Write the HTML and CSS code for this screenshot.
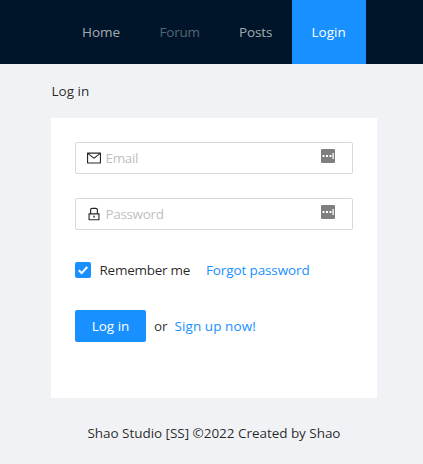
FILE: index.html
```html
<!DOCTYPE html>
<html lang="en">
<head>
<meta charset="utf-8">
<title>Log in</title>
<link rel="stylesheet" href="styles.css">
</head>
<body>
<header class="header">
  <nav class="menu">
    <a class="item home">Home</a>
    <a class="item forum disabled">Forum</a>
    <a class="item posts">Posts</a>
    <a class="item login selected">Login</a>
  </nav>
</header>
<main class="content">
  <div class="breadcrumb"><span>Log in</span></div>
  <form class="card">
    <div class="field">
      <svg class="icon" viewBox="64 64 896 896"><path d="M928 160H96c-17.7 0-32 14.3-32 32v640c0 17.7 14.3 32 32 32h832c17.7 0 32-14.3 32-32V192c0-17.7-14.3-32-32-32zm-40 110.8V792H136V270.8l-27.6-21.5 39.3-50.5 42.8 33.3h643.1l42.8-33.3 39.3 50.5-27.7 21.5zM833.6 232L512 482 190.4 232l-42.8-33.3-39.3 50.5 27.6 21.5 341.6 265.6a55.99 55.99 0 0 0 68.7 0L888 270.8l27.6-21.5-39.3-50.5-42.7 33.2z"/></svg>
      <input class="input email" type="text" placeholder="Email">
      <svg class="manager" viewBox="0 0 14 14"><rect width="14" height="14" rx="1" fill="#7f7f7f"/><path d="M1.5 6h2v2h-2zM5 6h2v2H5zM8.5 6h2v2h-2zM11.5 4h1.3v6h-1.3z" fill="#fff"/></svg>
    </div>
    <div class="field">
      <svg class="icon" viewBox="64 64 896 896"><path d="M832 464h-68V240c0-70.7-57.3-128-128-128H388c-70.7 0-128 57.3-128 128v224h-68c-17.7 0-32 14.3-32 32v384c0 17.7 14.3 32 32 32h640c17.7 0 32-14.3 32-32V496c0-17.7-14.3-32-32-32zM332 240c0-30.9 25.1-56 56-56h248c30.9 0 56 25.1 56 56v224H332V240zm460 600H232V536h560v304zM484 701v53c0 4.4 3.6 8 8 8h40c4.4 0 8-3.6 8-8v-53a48.1 48.1 0 1 0-56 0z"/></svg>
      <input class="input password" type="password" placeholder="Password">
      <svg class="manager" viewBox="0 0 14 14"><rect width="14" height="14" rx="1" fill="#7f7f7f"/><path d="M1.5 6h2v2h-2zM5 6h2v2H5zM8.5 6h2v2h-2zM11.5 4h1.3v6h-1.3z" fill="#fff"/></svg>
    </div>
    <div class="row">
      <svg class="checkbox" viewBox="0 0 16 16"><rect width="16" height="16" rx="2" fill="#1890ff"/><path d="M3.8 8.2l2.9 2.9 5.5-6.1" fill="none" stroke="#fff" stroke-width="2"/></svg>
      <span class="remember">Remember me</span>
      <a class="link forgot">Forgot password</a>
    </div>
    <div class="row">
      <button class="button" type="button">Log in</button>
      <span class="or">or</span>
      <a class="link signup">Sign up now!</a>
    </div>
  </form>
</main>
<footer class="footer"><span>Shao Studio [SS] ©2022 Created by Shao</span></footer>
</body>
</html>
```
FILE: styles.css
```css
* { box-sizing: border-box; }
body {
  margin: 0;
  height: 464px;
  overflow: hidden;
  background: #f0f2f5;
  color: rgba(0, 0, 0, .85);
  font: 13.5px/22px "Open Sans", "Noto Sans", sans-serif;
}
.header { height: 64px; padding-left: 62px; background: #001529; }
.menu { display: flex; height: 64px; line-height: 64px; }
.item { padding-left: 20px; color: rgba(255, 255, 255, .65); white-space: nowrap; }
.home { width: 77.5px; }
.forum { width: 79.5px; letter-spacing: -.2px; }
.posts { width: 73px; letter-spacing: -.15px; }
.login { width: 74px; padding-left: 19.5px; }
.disabled { color: rgba(255, 255, 255, .35); }
.selected { background: #1890ff; color: #fff; }
.content { padding: 0 46px 0 51px; }
.breadcrumb { padding: 16px 0 16px .5px; }
.card { height: 280px; padding: 24px; background: #fff; }
.field {
  display: flex;
  align-items: center;
  height: 32px;
  margin-bottom: 24px;
  padding: 0 17px 0 11px;
  border: 1px solid #d9d9d9;
  border-radius: 2px;
}
.icon { width: 14px; height: 14px; margin-right: 4px; flex: none; fill: rgba(0, 0, 0, .85); }
.input {
  flex: 1;
  min-width: 0;
  padding: 0 0 0 .5px;
  border: 0;
  outline: 0;
  background: none;
  font: inherit;
  letter-spacing: -.35px;
}
.input::placeholder { color: #bfbfbf; }
.manager { width: 14px; height: 14px; margin-bottom: 4px; flex: none; }
.row { display: flex; align-items: center; height: 32px; margin-bottom: 24px; white-space: nowrap; }
.checkbox { width: 16px; height: 16px; flex: none; }
.remember { width: 115px; padding-left: 8.5px; letter-spacing: -.25px; }
.link { color: #1890ff; }
.forgot { letter-spacing: -.12px; }
.button {
  width: 71px;
  height: 32px;
  padding: 0;
  border: 0;
  border-radius: 2px;
  background: #1890ff;
  color: #fff;
  font: inherit;
}
.or { width: 28px; padding-left: 8px; letter-spacing: -.2px; }
.signup { padding-left: .5px; letter-spacing: .08px; }
.footer { padding: 24px 0 24px 87.5px; white-space: nowrap; letter-spacing: -.04px; }
```
